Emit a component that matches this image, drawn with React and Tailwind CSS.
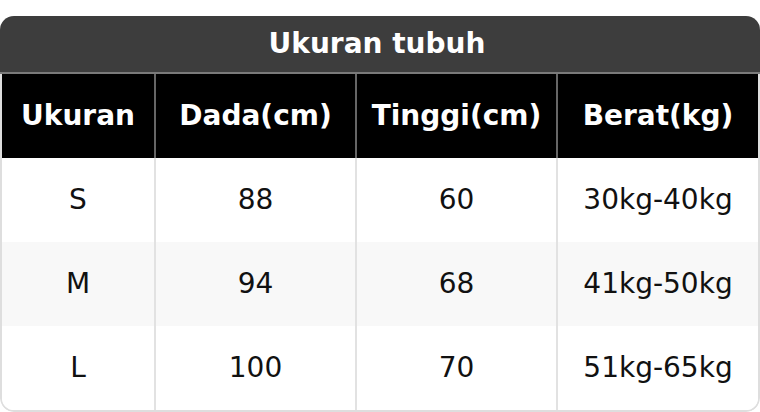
import React from "react";

const rows = [
  ["S", "88", "60", "30kg-40kg"],
  ["M", "94", "68", "41kg-50kg"],
  ["L", "100", "70", "51kg-65kg"],
];
const heads = ["Ukuran", "Dada(cm)", "Tinggi(cm)", "Berat(kg)"];

export default function App() {
  return (
    <div className="w-[760px] h-[412px] bg-white pt-[16px]" style={{ fontFamily: '"DejaVu Sans", sans-serif' }}>
      <div className="rounded-[14px] overflow-hidden">
        <div className="h-[56px] bg-[#3d3d3d] flex items-center justify-center pr-[6px] text-[28px] font-bold text-white">
          Ukuran tubuh
        </div>
        <div className="h-[2px] bg-[#7a7a7a]" />
        <div className="border-x-2 border-b-2 border-[#dedede] rounded-b-[14px] overflow-hidden">
          <div className="grid grid-cols-[152px_201px_201px_1fr] h-[84px] bg-black">
            {heads.map((h, i) => (
              <div
                key={h}
                className={
                  "flex items-center justify-center text-[28px] font-bold text-white " +
                  (i > 0 ? "border-l-2 border-[#666]" : "")
                }
              >
                {h}
              </div>
            ))}
          </div>
          {rows.map((r, ri) => (
            <div
              key={ri}
              className={
                "grid grid-cols-[152px_201px_201px_1fr] h-[84px] " +
                (ri === 1 ? "bg-[#f8f8f8]" : "bg-white")
              }
            >
              {r.map((c, i) => (
                <div
                  key={i}
                  className={
                    "flex items-center justify-center text-[28px] text-[#111]" +
                    (i > 0 ? " border-l-2 border-[#e2e2e2]" : "")
                  }
                >
                  {c}
                </div>
              ))}
            </div>
          ))}
        </div>
      </div>
    </div>
  );
}
